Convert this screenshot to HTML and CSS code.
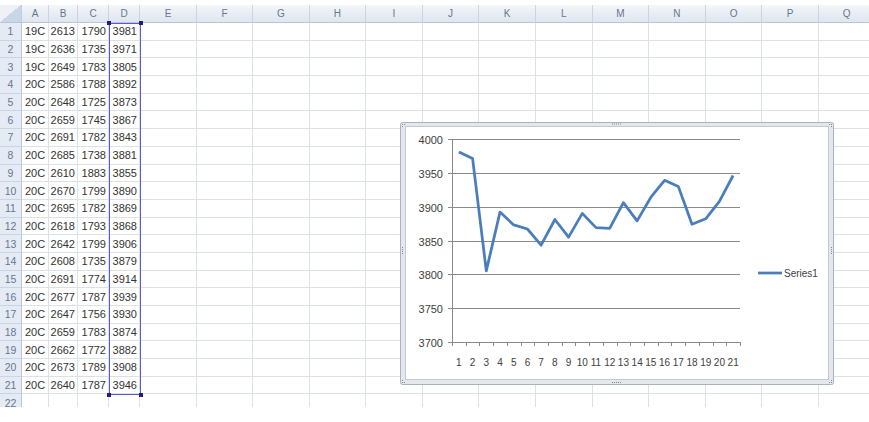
FILE: index.html
```html
<!DOCTYPE html>
<html lang="en">
<head>
    <meta charset="UTF-8">
    <title>Book1 - Series1</title>
    <link rel="stylesheet" href="styles.css">
</head>
<body>

    <div class="sheet" id="sheet">
        <!-- chart source range D1:D21 -->
        <div class="range-box">
            <span class="grip tl"></span>
            <span class="grip tr"></span>
            <span class="grip bl"></span>
            <span class="grip br"></span>
        </div>

        <div class="chart">
            <svg width="434" height="263" viewBox="0 0 434 263" id="chartSvg">
                <!-- selection frame -->
                <rect x="0.5" y="0.5" width="433" height="262" rx="2" class="frame-outer"/>
                <rect x="5.5" y="4.5" width="423" height="253" class="frame-inner"/>

                <g class="handle">
                    <rect x="212" y="1.5" width="1" height="1"/><rect x="214" y="1.5" width="1" height="1"/>
                    <rect x="216" y="1.5" width="1" height="1"/><rect x="218" y="1.5" width="1" height="1"/>
                    <rect x="220" y="1.5" width="1" height="1"/>
                    <rect x="212" y="260" width="1" height="1"/><rect x="214" y="260" width="1" height="1"/>
                    <rect x="216" y="260" width="1" height="1"/><rect x="218" y="260" width="1" height="1"/>
                    <rect x="220" y="260" width="1" height="1"/>
                    <rect x="2" y="125" width="1" height="1"/><rect x="2" y="127" width="1" height="1"/>
                    <rect x="2" y="129" width="1" height="1"/><rect x="2" y="131" width="1" height="1"/>
                    <rect x="431" y="125" width="1" height="1"/><rect x="431" y="127" width="1" height="1"/>
                    <rect x="431" y="129" width="1" height="1"/><rect x="431" y="131" width="1" height="1"/>
                    <!-- corners -->
                    <rect x="2" y="2" width="1" height="1"/><rect x="4" y="2" width="1" height="1"/><rect x="2" y="4" width="1" height="1"/>
                    <rect x="431" y="2" width="1" height="1"/><rect x="429" y="2" width="1" height="1"/><rect x="431" y="4" width="1" height="1"/>
                    <rect x="2" y="260" width="1" height="1"/><rect x="4" y="260" width="1" height="1"/><rect x="2" y="258" width="1" height="1"/>
                    <rect x="431" y="260" width="1" height="1"/><rect x="429" y="260" width="1" height="1"/><rect x="431" y="258" width="1" height="1"/>
                </g>

                <g id="grid" class="gridlines"></g>
                <g id="yLabels" class="axis-text y-text"></g>
                <g id="xLabels" class="axis-text"></g>
                <polyline id="series" class="series" points=""/>

                <!-- legend -->
                <line x1="358" y1="151" x2="382" y2="151" class="series"/>
                <text x="384" y="155" class="axis-text">Series1</text>
            </svg>
        </div>
    </div>

    <script>
        const rows = [
            ["19C", 2613, 1790, 3981],
            ["19C", 2636, 1735, 3971],
            ["19C", 2649, 1783, 3805],
            ["20C", 2586, 1788, 3892],
            ["20C", 2648, 1725, 3873],
            ["20C", 2659, 1745, 3867],
            ["20C", 2691, 1782, 3843],
            ["20C", 2685, 1738, 3881],
            ["20C", 2610, 1883, 3855],
            ["20C", 2670, 1799, 3890],
            ["20C", 2695, 1782, 3869],
            ["20C", 2618, 1793, 3868],
            ["20C", 2642, 1799, 3906],
            ["20C", 2608, 1735, 3879],
            ["20C", 2691, 1774, 3914],
            ["20C", 2677, 1787, 3939],
            ["20C", 2647, 1756, 3930],
            ["20C", 2659, 1783, 3874],
            ["20C", 2662, 1772, 3882],
            ["20C", 2673, 1789, 3908],
            ["20C", 2640, 1787, 3946]
        ];
        const letters = "ABCDEFGHIJKLMNOPQ".split("");
        const sheet = document.getElementById("sheet");

        function addCell(cls, text) {
            const div = document.createElement("div");
            div.className = cls;
            if (text !== undefined) div.textContent = text;
            sheet.appendChild(div);
        }

        // column headings
        addCell("corner");
        letters.forEach(l => addCell("col-head", l));

        // 22 rows, the last one is cut off by the window
        for (let r = 0; r < 22; r++) {
            addCell("row-head", r + 1);
            letters.forEach((l, c) => {
                const data = rows[r];
                if (data && c < 4) {
                    addCell(c === 0 ? "cell text" : "cell num", data[c]);
                } else {
                    addCell("cell");
                }
            });
        }

        // line chart of column D
        const NS = "http://www.w3.org/2000/svg";
        const plot = { left: 52, right: 340, top: 17, bottom: 220, min: 3700, max: 4000, step: 50 };
        const yOf = v => plot.bottom - (v - plot.min) * (plot.bottom - plot.top) / (plot.max - plot.min);
        const band = (plot.right - plot.left) / rows.length;

        function svgEl(name, attrs, parent, text) {
            const el = document.createElementNS(NS, name);
            for (const k in attrs) el.setAttribute(k, attrs[k]);
            if (text !== undefined) el.textContent = text;
            document.getElementById(parent).appendChild(el);
        }

        for (let v = plot.min; v <= plot.max; v += plot.step) {
            const y = Math.round(yOf(v)) + 0.5;
            svgEl("line", { x1: plot.left - 4, y1: y, x2: plot.right, y2: y }, "grid");
            svgEl("text", { x: 43, y: y + 4, "text-anchor": "end" }, "yLabels", v);
        }
        svgEl("line", { x1: plot.left + 0.5, y1: plot.top, x2: plot.left + 0.5, y2: plot.bottom + 1 }, "grid");
        for (let i = 0; i <= rows.length; i++) {
            const x = Math.round(plot.left + i * band) + 0.5;
            svgEl("line", { x1: x, y1: plot.bottom, x2: x, y2: plot.bottom + 4 }, "grid");
        }

        const pts = rows.map((row, i) => {
            const x = plot.left + (i + 0.5) * band;
            svgEl("text", { x: x, y: 244, "text-anchor": "middle" }, "xLabels", i + 1);
            return x.toFixed(1) + "," + yOf(row[3]).toFixed(1);
        });
        document.getElementById("series").setAttribute("points", pts.join(" "));
    </script>

</body>
</html>
```

FILE: styles.css
```css
/* Page */
body {
    margin: 0;
    background-color: #ffffff;
    font-family: "Liberation Sans", Arial, sans-serif;
    overflow: hidden;
}

/* Worksheet grid */
.sheet {
    position: relative;
    margin-top: 5px;
    height: 402px;
    width: 869px;
    overflow: hidden;
    display: grid;
    grid-template-columns: 22px 27px 29px 31px 31px 57px 56px repeat(11, 56.6px);
    grid-template-rows: 18px repeat(22, 17.7px);
}

.sheet > div {
    box-sizing: border-box;
}

.corner {
    background: linear-gradient(to bottom right, #eef2f8 50%, #c9d6e6 50%);
    border-right: 1px solid #c2cedc;
    border-bottom: 1px solid #b8c6d8;
}

.col-head {
    background: linear-gradient(#f3f6fa, #dfe6ef);
    border-right: 1px solid #cbd5e2;
    border-bottom: 1px solid #b8c6d8;
    color: #66768f;
    font-size: 10px;
    display: flex;
    align-items: center;
    justify-content: center;
}

.row-head {
    background-color: #e5ebf4;
    border-right: 1px solid #b8c6d8;
    border-bottom: 1px solid #cbd5e2;
    color: #66768f;
    font-size: 10.5px;
    display: flex;
    align-items: center;
    justify-content: center;
}

.cell {
    border-right: 1px solid #dce1e7;
    border-bottom: 1px solid #dce1e7;
    color: #333333;
    font-size: 11px;
    display: flex;
    align-items: center;
    white-space: nowrap;
}

.cell.text {
    padding-left: 3px;
}

.cell.num {
    justify-content: flex-end;
    padding-right: 2px;
}

/* Highlighted source range of the chart */
.range-box {
    position: absolute;
    left: 109px;
    top: 18px;
    width: 32px;
    height: 372px;
    box-sizing: border-box;
    border: 1px solid #5a5ad6;
}

.grip {
    position: absolute;
    width: 4px;
    height: 4px;
    background-color: #1f1f7a;
}

.grip.tl { left: -3px; top: -3px; }
.grip.tr { right: -3px; top: -3px; }
.grip.bl { left: -3px; bottom: -3px; }
.grip.br { right: -3px; bottom: -3px; }

/* Embedded chart */
.chart {
    position: absolute;
    left: 400px;
    top: 117px;
    width: 434px;
    height: 263px;
}

.chart svg {
    display: block;
}

.frame-outer {
    fill: #e4e8ed;
    stroke: #aab2bd;
    stroke-width: 1;
}

.frame-inner {
    fill: #ffffff;
    stroke: #c3c9d2;
    stroke-width: 1;
}

.handle rect {
    fill: #7e8894;
}

.gridlines line {
    stroke: #8a8a8a;
    stroke-width: 1;
}

.axis-text {
    font-family: "Liberation Sans", Arial, sans-serif;
    font-size: 10px;
    fill: #404040;
}

.y-text {
    font-size: 11px;
}

.series {
    fill: none;
    stroke: #4a7ebb;
    stroke-width: 2.75;
    stroke-linejoin: round;
}
```
